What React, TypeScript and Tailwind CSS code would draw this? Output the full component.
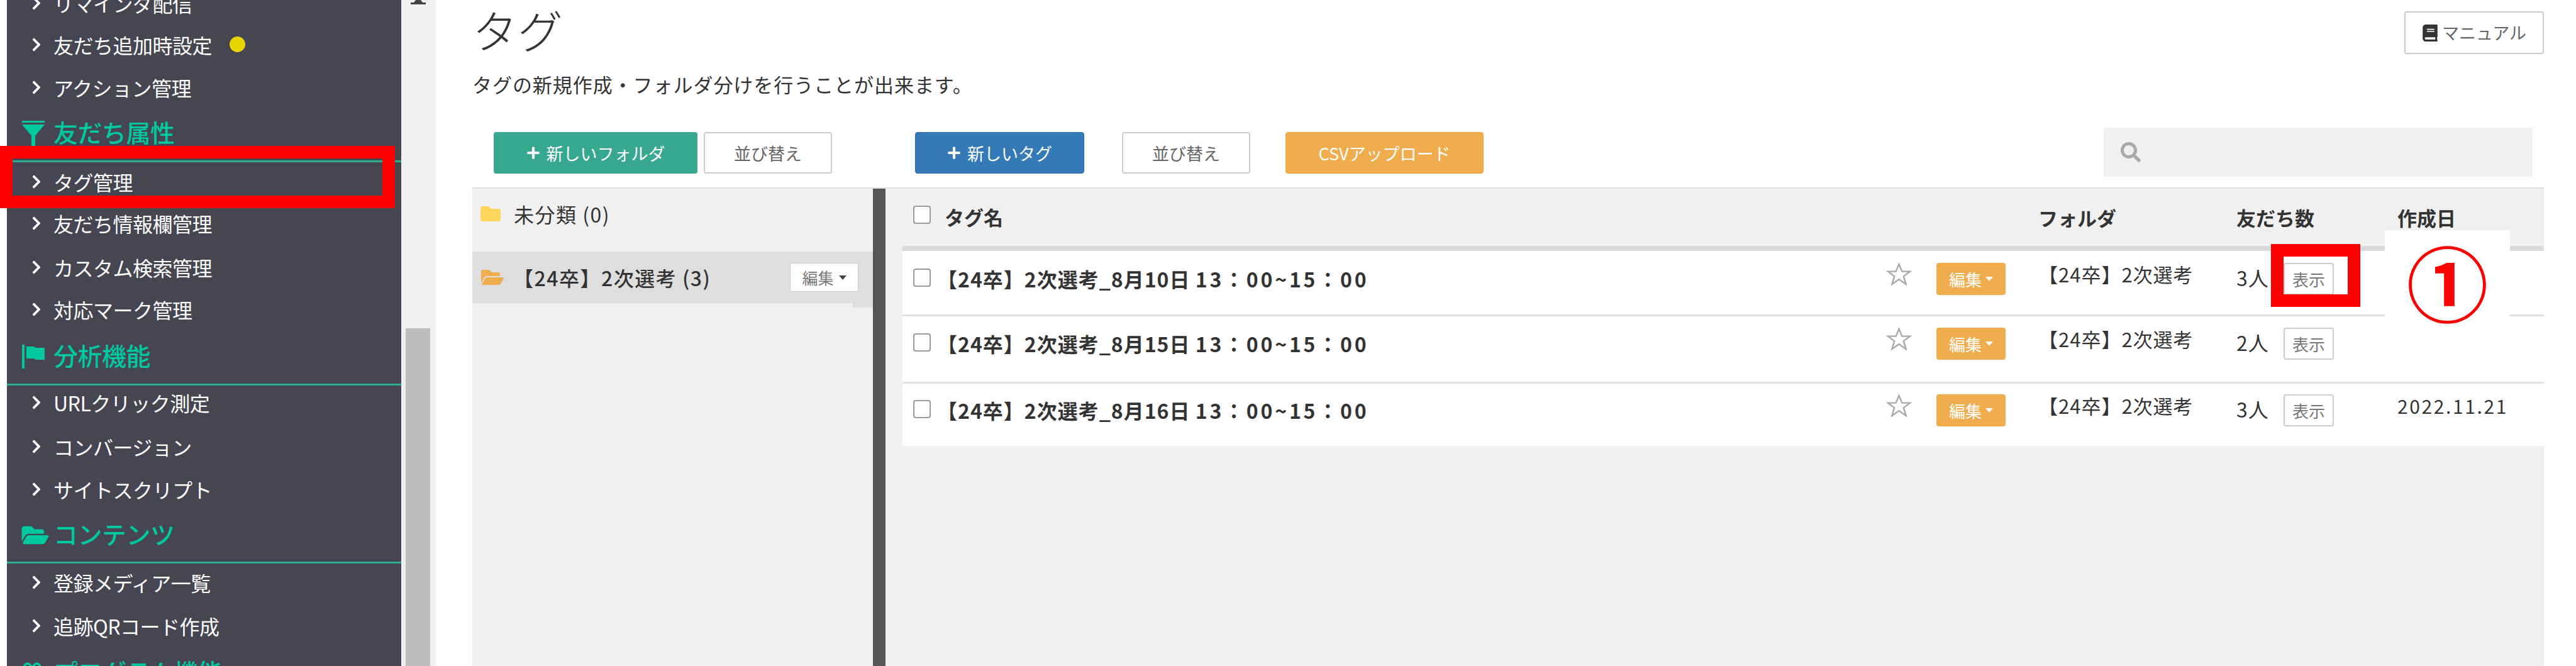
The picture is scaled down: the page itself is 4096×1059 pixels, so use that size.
import React from "react";
import { FaFolder, FaFolderOpen, FaGift, FaBook, FaSearch, FaPlus, FaChevronRight } from "react-icons/fa";

const font = { fontFamily: '"Noto Sans CJK JP", "Noto Sans", sans-serif' };

const NavItem = ({ label, className, dot }: { label: string; className: string; dot?: boolean }) => (
  <div className={`flex items-center shrink-0 pl-[39px] text-[32px] leading-none tracking-[-0.5px] text-white ${className}`}>
    <FaChevronRight className="w-[16px] h-[24px] mr-[19px] shrink-0" />
    <span className="whitespace-nowrap">{label}</span>
    {dot && <span className="ml-[28px] w-[25px] h-[25px] rounded-full bg-[#e8d500]" />}
  </div>
);

const NavHead = ({ icon, label, className }: { icon: React.ReactNode; label: string; className: string }) => (
  <div className={`flex items-start shrink-0 pl-[24px] border-b-[3px] border-[#2fae94] text-[39px] leading-none font-medium text-[#00c8a0] ${className}`}>
    <span className="w-[50px] h-[44px] flex items-center shrink-0">{icon}</span>
    <span className="whitespace-nowrap tracking-[-0.5px]">{label}</span>
  </div>
);

const Checkbox = ({ className }: { className: string }) => (
  <span className={`block w-[28px] h-[29px] bg-white rounded-[4px] border-2 border-[#9a9a9a] ${className}`} />
);

const Caret = ({ className }: { className: string }) => (
  <span className={`inline-block w-0 h-0 border-x-[6px] border-x-transparent border-t-[7px] ${className}`} />
);

const rows = [
  { name: "【24卒】2次選考_8月10日 ", count: "3人", date: "", pad: "pt-[19px] h-[104px] border-b-[3px]" },
  { name: "【24卒】2次選考_8月15日 ", count: "2人", date: "", pad: "pt-[18px] h-[107px] border-b-[3px]" },
  { name: "【24卒】2次選考_8月16日 ", count: "3人", date: "2022.11.21", pad: "pt-[17px] h-[99px]" },
];

const gridCols = "grid grid-cols-[55px_1509px_80px_178px_299px_256px_233px]";

export default function App() {
  return (
    <div style={font} className="relative flex w-[4096px] h-[1059px] overflow-hidden bg-white text-[#333]">
      {/* サイドバー */}
      <div className="ml-[11px] w-[627px] h-full shrink-0 overflow-hidden bg-[#454652]">
        <div className="flex flex-col -mt-[27px]">
          <NavItem label="リマインダ配信" className="h-[64px]" />
          <NavItem label="友だち追加時設定" className="h-[67px]" dot />
          <NavItem label="アクション管理" className="h-[70px]" />
          <NavHead
            label="友だち属性"
            className="h-[84px] pt-[16px]"
            icon={
              <svg viewBox="0 0 36 40" className="w-[36px] h-[40px]" fill="#00c8a0">
                <rect x="0" y="0" width="36" height="3" />
                <path d="M0 6h36L21 24v16h-6V24z" />
              </svg>
            }
          />
          <NavItem label="タグ管理" className="h-[62px]" />
          <NavItem label="友だち情報欄管理" className="h-[70px]" />
          <NavItem label="カスタム検索管理" className="h-[70px]" />
          <NavItem label="対応マーク管理" className="h-[64px]" />
          <NavHead
            label="分析機能"
            className="h-[89px] pt-[21px]"
            icon={
              <svg viewBox="0 0 36 38" className="w-[36px] h-[38px]" fill="#00c8a0">
                <rect x="0" y="0" width="4" height="38" />
                <path d="M7 3h12l3 2h14v19H22l-3-2H7z" />
              </svg>
            }
          />
          <NavItem label="URLクリック測定" className="h-[54px]" />
          <NavItem label="コンバージョン" className="h-[86px]" />
          <NavItem label="サイトスクリプト" className="h-[50px]" />
          <NavHead label="コンテンツ" className="h-[93px] pt-[26px]" icon={<FaFolderOpen className="-ml-[4px] w-[50px] h-[38px]" />} />
          <NavItem label="登録メディア一覧" className="h-[60px]" />
          <NavItem label="追跡QRコード作成" className="h-[78px]" />
          <NavHead label="プログラム機能" className="h-[60px] pt-[14px]" icon={<FaGift className="-ml-[4px] w-[40px] h-[38px]" />} />
        </div>
      </div>

      {/* スクロールバー */}
      <div className="relative w-[55px] h-full shrink-0 bg-[#f1f1f1] pl-[7px] pr-[9px] pt-[522px]">
        <svg viewBox="0 0 24 7" className="absolute left-[15px] top-0 w-[24px] h-[7px]" fill="#444">
          <path d="M8 0h8l3 4h5v3H0V4h5z" />
        </svg>
        <div className="h-[537px] bg-[#bdbdbd]" />
      </div>

      {/* メイン */}
      <div className="flex-1 min-w-0 flex flex-col pl-[58px] pr-[51px]">
        <div className="flex justify-between h-[102px] shrink-0">
          <div className="pt-[4px] text-[72px] leading-[84px] font-light">タグ</div>
          <div className="mt-[18px] w-[222px] h-[68px] flex items-center justify-center gap-[6px] bg-white border-2 border-[#ccc] rounded-[4px] text-[27px] text-[#666]">
            <FaBook className="w-[26px] h-[27px] text-[#333]" />
            <span>マニュアル</span>
          </div>
        </div>
        <div className="h-[68px] shrink-0 text-[31px] leading-[63px] tracking-[0.95px] text-[#333]">タグの新規作成・フォルダ分けを行うことが出来ます。</div>

        <div className="flex items-start h-[128px] shrink-0 text-[27px] leading-none">
          <div className="mt-[40px] ml-[34px] w-[324px] h-[66px] flex items-center justify-center gap-[10px] bg-[#37a88f] rounded-[4px] text-white">
            <FaPlus className="w-[22px] h-[22px]" />
            <span>新しいフォルダ</span>
          </div>
          <div className="mt-[40px] ml-[10px] w-[204px] h-[66px] flex items-center justify-center bg-white border-2 border-[#ccc] rounded-[4px] text-[#666]">並び替え</div>
          <div className="mt-[40px] ml-[132px] w-[269px] h-[66px] flex items-center justify-center gap-[10px] bg-[#337ab7] border border-[#2e6da4] rounded-[4px] text-white">
            <FaPlus className="w-[22px] h-[22px]" />
            <span>新しいタグ</span>
          </div>
          <div className="mt-[40px] ml-[60px] w-[204px] h-[66px] flex items-center justify-center bg-white border-2 border-[#ccc] rounded-[4px] text-[#666]">並び替え</div>
          <div className="mt-[40px] ml-[56px] w-[315px] h-[66px] flex items-center justify-center bg-[#f0ad4e] border border-[#eea236] rounded-[4px] text-white">CSVアップロード</div>
          <div className="mt-[33px] ml-[986px] w-[682px] h-[78px] flex items-center pl-[27px] bg-[#f0f0f0]">
            <FaSearch className="w-[32px] h-[32px] text-[#aaa]" />
          </div>
        </div>

        {/* フォルダとタグ一覧 */}
        <div className="flex flex-1 min-h-0 bg-[#f0f0f0] border-t-2 border-[#e0e0e0]">
          <div className="w-[637px] shrink-0 text-[32px] leading-none tracking-[1.5px]">
            <div className="flex items-center h-[80px] mb-[20px] pl-[11px]">
              <FaFolder className="w-[36px] h-[32px] mr-[19px] text-[#ffd75e]" />
              <span>未分類 (0)</span>
            </div>
            <div className="relative flex items-center h-[82px] pl-[11px] pr-[23px] bg-[#dedede]">
              <FaFolderOpen className="w-[42px] h-[32px] text-[#f0ad4e] shrink-0" />
              <span className="flex-1 ml-[12px] font-medium whitespace-nowrap">【24卒】2次選考 (3)</span>
              <div className="w-[109px] h-[46px] flex items-center justify-center gap-[8px] bg-white border border-[#ccc] rounded-[3px] text-[25px] tracking-normal text-[#777]">
                <span>編集</span>
                <Caret className="border-t-[#444]" />
              </div>
              <div className="absolute right-0 -bottom-[7px] w-[32px] h-[7px] bg-[#dedede]" />
            </div>
          </div>
          <div className="w-[20px] shrink-0 bg-[#555]" />
          <div className="flex-1 min-w-0 pl-[27px]">
            <div className={`${gridCols} h-[99px] items-center border-b-[8px] border-[#d9d9d9] text-[31px] leading-none font-bold`}>
              <div className="pl-[17px]">
                <Checkbox className="-mt-[8px]" />
              </div>
              <div className="pl-[12px] -mt-[2px]">タグ名</div>
              <div />
              <div />
              <div className="-ml-[16px]">フォルダ</div>
              <div>友だち数</div>
              <div>作成日</div>
            </div>
            {rows.map((r, i) => (
              <div key={i} className={`${gridCols} items-start bg-white border-[#e0e0e0] ${r.pad}`}>
                <div className="pl-[17px] pt-[9px]">
                  <Checkbox className="" />
                </div>
                <div className="text-[32px] leading-[50px] font-bold whitespace-nowrap tracking-[1px]">
                  {r.name}
                  <span className="tracking-[3.8px]">13：00~15：00</span>
                </div>
                <svg viewBox="0 0 40 37" className="w-[41px] h-[36px]" fill="none" stroke="#aaa" strokeWidth="2.5">
                  <polygon points="20,2 25,14 38,14 27.5,22 31.5,35 20,27 8.5,35 12.5,22 2,14 15,14" />
                </svg>
                <div className="w-[110px] h-[51px] flex items-center justify-center gap-[6px] bg-[#f0ad4e] rounded-[4px] text-[26px] text-white">
                  <span>編集</span>
                  <Caret className="border-t-white" />
                </div>
                <div className="-ml-[16px] text-[31px] leading-[36px] tracking-[1px] whitespace-nowrap">【24卒】2次選考</div>
                <div className="flex items-start">
                  <span className="w-[75px] text-[32px] leading-[46px] tracking-[1px]">{r.count}</span>
                  <span className="w-[80px] h-[51px] flex items-center justify-center bg-white border-2 border-[#ccc] rounded-[4px] text-[26px] text-[#777]">表示</span>
                </div>
                <div className="text-[30px] leading-[36px] tracking-[2.6px]">{r.date}</div>
              </div>
            ))}
          </div>
        </div>
      </div>

      {/* 注釈 */}
      <div className="absolute left-0 top-[232px] w-[628px] h-[99px] border-[20px] border-[#ff0000]" />
      <div className="absolute left-[3611px] top-[388px] w-[142px] h-[100px] border-[20px] border-[#ff0000]" />
      <div className="absolute left-[3792px] top-[366px] w-[199px] h-[182px] flex items-center justify-center pb-[24px] bg-white text-[130px] leading-none font-bold text-[#ff0000]">①</div>
    </div>
  );
}
